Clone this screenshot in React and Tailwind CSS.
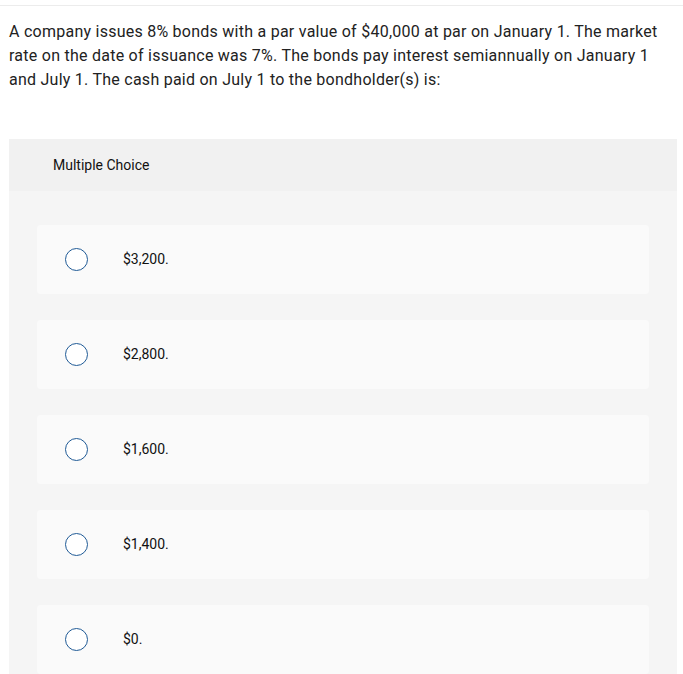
import React from 'react';

const options = ['$3,200.', '$2,800.', '$1,600.', '$1,400.', '$0.'];

const App = () => {
  return (
    <div className="min-h-screen bg-white" style={{ fontFamily: 'Roboto, "Open Sans", sans-serif' }}>
      <div className="h-[5px]" />
      <div className="border-t border-[#ececec]" />
      <div className="pl-[9px] pr-[6px]">
        {/* Question */}
        <p className="mt-[14px] text-[16px] leading-[24px] tracking-[0.25px] text-[#222]">
          A company issues 8% bonds with a par value of $40,000 at par on January 1. The market rate on the date of issuance was 7%. The bonds pay interest semiannually on January 1 and July 1. The cash paid on July 1 to the bondholder(s) is:
        </p>

        {/* Choices */}
        <div className="mt-[47px] rounded-t-[3px] bg-[#f5f5f5]">
          <div className="flex h-[52px] items-center bg-[#f1f1f1] pl-[44px] text-[14px] text-[#111]">
            Multiple Choice
          </div>
          <div className="flex flex-col gap-[26px] px-[28px] pt-[34px] pb-[20px]">
            {options.map((opt) => (
              <label key={opt} className="flex h-[69px] items-center rounded-[4px] bg-[#fafafa]">
                <span className="ml-[28px] h-[23px] w-[23px] rounded-full border-[1.5px] border-[#1f5a96] bg-white" />
                <span className="ml-[35px] text-[14px] text-[#111]">{opt}</span>
              </label>
            ))}
          </div>
        </div>
      </div>
    </div>
  );
};

export default App;
